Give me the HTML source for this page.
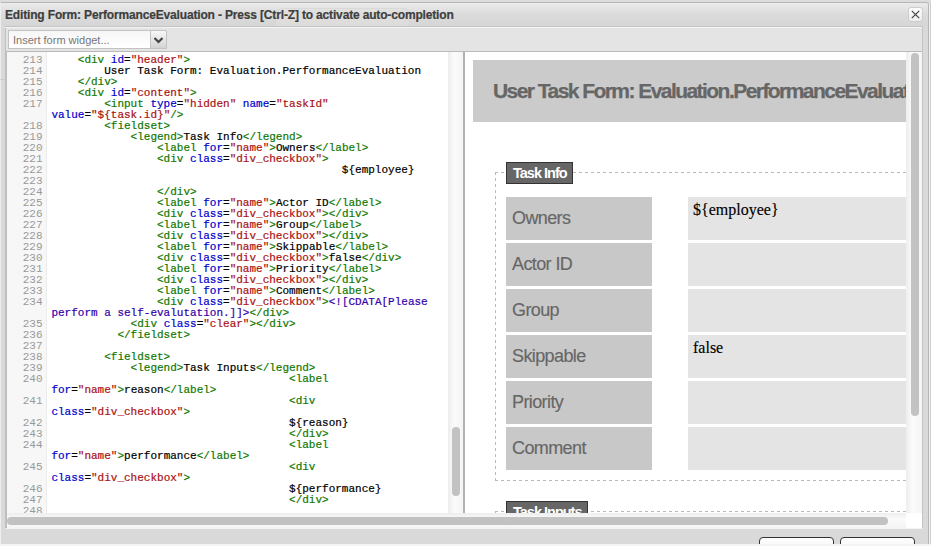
<!DOCTYPE html>
<html><head><meta charset="utf-8">
<style>
*{box-sizing:border-box}
html,body{margin:0;padding:0}
body{width:931px;height:546px;overflow:hidden;position:relative;background:#cfcfcf;font-family:"Liberation Sans",sans-serif}
.abs{position:absolute}
#topstrip{left:0;top:0;width:931px;height:3px;background:#dcdcdc}
#dialog{left:0;top:2px;width:929px;height:560px;background:#d9d9d9;border:1px solid #b6b6b6;border-left-color:#eeeeee;border-radius:0 3px 0 0}
#titlebar{left:1px;top:3px;width:927px;height:23px;background:linear-gradient(#ebebeb,#dcdcdc 45%,#d6d6d6);border-radius:0 2px 0 0}
#tab{left:275px;top:8px;width:135px;height:18px;background:#e3e2df;border:1px solid #d2d2d2;border-bottom:none;border-radius:7px 7px 0 0;opacity:.55}
#title{left:5px;top:8px;font:bold 12px "Liberation Sans",sans-serif;color:#3e3e3e;letter-spacing:-0.16px;-webkit-text-stroke:0.2px;white-space:nowrap}
#closebtn{left:908px;top:7px;width:15px;height:15px;border:1px solid #cdcdcd;border-radius:3px;background:linear-gradient(#fdfdfd,#ececec)}
#frame{left:5px;top:26px;width:918px;height:503px;background:#e4e4e4;border:1px solid #c4c4c4;border-left-color:#c0c0c0;border-bottom-color:#f4f4f4}
#frame2{left:5px;top:27px;width:917px;height:1px;background:#f3f3f3}
#toolbar{left:6px;top:51px;width:916px;height:1px;background:#b9b9b9}
#lframe{left:6px;top:52px;width:1px;height:476px;background:#bdbdbd}
#select{left:8px;top:30px;width:143px;height:19px;background:linear-gradient(#f6f6f6,#fff);border:1px solid #c3c3c3;border-right:none}
#selbtn{left:150px;top:30px;width:17px;height:19px;background:linear-gradient(#f8f8f8,#d3d3d3);border:1px solid #c3c3c3;border-radius:0 2px 0 0}
#seltext{left:13px;top:34px;font:11px "Liberation Sans",sans-serif;color:#777;white-space:nowrap}
#codepane{left:7px;top:52px;width:441px;height:461px;background:#fff;overflow:hidden}
#gutter{left:0;top:0;width:40px;height:461px;background:#f7f7f7;border-right:1px solid #ececec}
#nums{position:absolute;right:3.5px;top:3px;font:11px/11px "Liberation Mono",monospace;color:#999;white-space:pre;text-align:right}
#code{position:absolute;left:44.4px;top:3px;-webkit-text-stroke:0.2px;font:11px/11px "Liberation Mono",monospace;color:#000;white-space:pre}
.t{color:#170}.a{color:#00c}.s{color:#a11}.c{color:#30a}
#vs1{left:448px;top:52px;width:15px;height:461px;background:linear-gradient(90deg,#ededed,#fbfbfb 40%,#f4f4f4)}
#vs1t{left:452px;top:427px;width:8px;height:69px;border-radius:4px;background:#c2c2c2}
#divider{left:463px;top:52px;width:2px;height:461px;background:#b2b2b2}
#preview{left:465px;top:52px;width:441px;height:461px;background:#fff;overflow:hidden}
#vs2{left:906px;top:52px;width:16px;height:461px;background:linear-gradient(90deg,#ededed,#fbfbfb 40%,#f4f4f4)}
#vs2t{left:911px;top:53px;width:8px;height:363px;border-radius:4px;background:#c2c2c2}
#hs{left:7px;top:513px;width:899px;height:15px;background:linear-gradient(#ededed,#fbfbfb 40%,#f4f4f4)}
#hst{left:7px;top:517px;width:881px;height:8px;border-radius:4px;background:#c2c2c2}
#corner{left:906px;top:513px;width:16px;height:15px;background:#fff}
.btn{top:537px;height:20px;border:1.6px solid #333;border-radius:4px;background:linear-gradient(#fff,#ececec)}
/* preview */
#phead{left:8px;top:8px;width:460px;height:62px;background:#cbcbcb}
#phtext{left:28px;top:27px;font:bold 21px "Liberation Sans",sans-serif;color:#666;letter-spacing:-1.55px;-webkit-text-stroke:0.25px;white-space:nowrap}
.fs{background:repeating-linear-gradient(90deg,#b9b9b9 0 3px,transparent 3px 6px) 0 0/100% 1px no-repeat,repeating-linear-gradient(90deg,#b9b9b9 0 3px,transparent 3px 6px) 0 100%/100% 1px no-repeat,repeating-linear-gradient(180deg,#b9b9b9 0 3px,transparent 3px 6px) 0 0/1px 100% no-repeat}
#fs1{left:30px;top:120px;width:430px;height:309px}
.legend{height:22px;background:#666;border:1px solid #333;color:#fff;font:bold 14.5px "Liberation Sans",sans-serif;letter-spacing:-1px;white-space:nowrap;padding:2px 0 0 6px}
.lbl{left:41px;width:146px;height:43px;background:#c8c8c8;color:#666;font:18px "Liberation Sans",sans-serif;letter-spacing:-0.6px;-webkit-text-stroke:0.15px;padding:11px 0 0 6px;white-space:nowrap}
.val{left:223px;width:240px;height:43px;background:#e4e4e4;color:#000;font:16px "Liberation Serif",serif;padding:4px 0 0 5px;white-space:nowrap;-webkit-text-stroke:0.15px}
</style></head><body>
<div id="topstrip" class="abs"></div>
<div id="dialog" class="abs"></div>
<div id="titlebar" class="abs"></div>
<div id="tab" class="abs"></div>
<div id="title" class="abs">Editing Form: PerformanceEvaluation - Press [Ctrl-Z] to activate auto-completion</div>
<div id="closebtn" class="abs"><svg width="13" height="13" viewBox="0 0 13 13" style="position:absolute;left:0;top:0"><path d="M2.8 2.8L10.2 10.2M10.2 2.8L2.8 10.2" stroke="#3c3c3c" stroke-width="1.15"/></svg></div>
<div id="frame" class="abs"></div>
<div id="frame2" class="abs"></div>
<div id="toolbar" class="abs"></div>
<div id="lframe" class="abs"></div>
<div id="select" class="abs"></div>
<div id="selbtn" class="abs"><svg width="15" height="17" viewBox="0 0 15 17" style="position:absolute;left:0;top:0"><path d="M3.5 7L7.5 11L11.5 7" fill="none" stroke="#444" stroke-width="2.2"/></svg></div>
<div id="seltext" class="abs">Insert form widget...</div>
<div id="codepane" class="abs">
  <div id="gutter" class="abs"><div id="nums">213
214
215
216
217

218
219
220
221
222
223
224
225
226
227
228
229
230
231
232
233
234

235
236
237
238
239
240

241

242
243
244

245

246
247
248</div></div>
  <div id="code">    <span class="t">&lt;div</span> <span class="a">id</span>=<span class="s">"header"</span><span class="t">&gt;</span>
        User Task Form: Evaluation.PerformanceEvaluation
    <span class="t">&lt;/div&gt;</span>
    <span class="t">&lt;div</span> <span class="a">id</span>=<span class="s">"content"</span><span class="t">&gt;</span>
        <span class="t">&lt;input</span> <span class="a">type</span>=<span class="s">"hidden"</span> <span class="a">name</span>=<span class="s">"taskId"</span>
<span class="a">value</span>=<span class="s">"${task.id}"</span><span class="t">/&gt;</span>
        <span class="t">&lt;fieldset&gt;</span>
            <span class="t">&lt;legend&gt;</span>Task Info<span class="t">&lt;/legend&gt;</span>
                <span class="t">&lt;label</span> <span class="a">for</span>=<span class="s">"name"</span><span class="t">&gt;</span>Owners<span class="t">&lt;/label&gt;</span>
                <span class="t">&lt;div</span> <span class="a">class</span>=<span class="s">"div_checkbox"</span><span class="t">&gt;</span>
                                            ${employee}

                <span class="t">&lt;/div&gt;</span>
                <span class="t">&lt;label</span> <span class="a">for</span>=<span class="s">"name"</span><span class="t">&gt;</span>Actor ID<span class="t">&lt;/label&gt;</span>
                <span class="t">&lt;div</span> <span class="a">class</span>=<span class="s">"div_checkbox"</span><span class="t">&gt;</span><span class="t">&lt;/div&gt;</span>
                <span class="t">&lt;label</span> <span class="a">for</span>=<span class="s">"name"</span><span class="t">&gt;</span>Group<span class="t">&lt;/label&gt;</span>
                <span class="t">&lt;div</span> <span class="a">class</span>=<span class="s">"div_checkbox"</span><span class="t">&gt;</span><span class="t">&lt;/div&gt;</span>
                <span class="t">&lt;label</span> <span class="a">for</span>=<span class="s">"name"</span><span class="t">&gt;</span>Skippable<span class="t">&lt;/label&gt;</span>
                <span class="t">&lt;div</span> <span class="a">class</span>=<span class="s">"div_checkbox"</span><span class="t">&gt;</span>false<span class="t">&lt;/div&gt;</span>
                <span class="t">&lt;label</span> <span class="a">for</span>=<span class="s">"name"</span><span class="t">&gt;</span>Priority<span class="t">&lt;/label&gt;</span>
                <span class="t">&lt;div</span> <span class="a">class</span>=<span class="s">"div_checkbox"</span><span class="t">&gt;</span><span class="t">&lt;/div&gt;</span>
                <span class="t">&lt;label</span> <span class="a">for</span>=<span class="s">"name"</span><span class="t">&gt;</span>Comment<span class="t">&lt;/label&gt;</span>
                <span class="t">&lt;div</span> <span class="a">class</span>=<span class="s">"div_checkbox"</span><span class="t">&gt;</span><span class="c">&lt;![CDATA[Please</span>
<span class="c">perform a self-evalutation.]]&gt;</span><span class="t">&lt;/div&gt;</span>
            <span class="t">&lt;div</span> <span class="a">class</span>=<span class="s">"clear"</span><span class="t">&gt;</span><span class="t">&lt;/div&gt;</span>
          <span class="t">&lt;/fieldset&gt;</span>

        <span class="t">&lt;fieldset&gt;</span>
            <span class="t">&lt;legend&gt;</span>Task Inputs<span class="t">&lt;/legend&gt;</span>
                                    <span class="t">&lt;label</span>
<span class="a">for</span>=<span class="s">"name"</span><span class="t">&gt;</span>reason<span class="t">&lt;/label&gt;</span>
                                    <span class="t">&lt;div</span>
<span class="a">class</span>=<span class="s">"div_checkbox"</span><span class="t">&gt;</span>
                                    ${reason}
                                    <span class="t">&lt;/div&gt;</span>
                                    <span class="t">&lt;label</span>
<span class="a">for</span>=<span class="s">"name"</span><span class="t">&gt;</span>performance<span class="t">&lt;/label&gt;</span>
                                    <span class="t">&lt;div</span>
<span class="a">class</span>=<span class="s">"div_checkbox"</span><span class="t">&gt;</span>
                                    ${performance}
                                    <span class="t">&lt;/div&gt;</span>
</div>
</div>
<div id="vs1" class="abs"></div>
<div id="vs1t" class="abs"></div>
<div id="divider" class="abs"></div>
<div id="preview" class="abs">
  <div id="phead" class="abs"></div>
  <div id="phtext" class="abs">User Task Form: Evaluation.PerformanceEvaluation</div>
  <div id="fs1" class="abs fs"></div>
  <div class="abs legend" style="left:41px;top:110px;width:67px">Task Info</div>
  <div class="abs lbl" style="top:145px">Owners</div>
  <div class="abs val" style="top:145px">${employee}</div>
  <div class="abs lbl" style="top:191px">Actor ID</div>
  <div class="abs val" style="top:191px"></div>
  <div class="abs lbl" style="top:237px">Group</div>
  <div class="abs val" style="top:237px"></div>
  <div class="abs lbl" style="top:283px">Skippable</div>
  <div class="abs val" style="top:283px">false</div>
  <div class="abs lbl" style="top:329px">Priority</div>
  <div class="abs val" style="top:329px"></div>
  <div class="abs lbl" style="top:375px">Comment</div>
  <div class="abs val" style="top:375px"></div>
  <div id="fs2" class="abs fs" style="left:30px;top:459px;width:430px;height:100px"></div>
  <div class="abs legend" style="left:41px;top:449px;width:82px">Task Inputs</div>
</div>
<div id="vs2" class="abs"></div>
<div id="vs2t" class="abs"></div>
<div id="hs" class="abs"></div>
<div id="hst" class="abs"></div>
<div id="corner" class="abs"></div>
<div class="abs" style="left:0;top:79px;width:5px;height:1px;background:#cdcdcd"></div>
<div class="abs" style="left:929px;top:3px;width:1px;height:543px;background:#efefef"></div>
<div class="abs btn" style="left:759px;width:75px"></div>
<div class="abs btn" style="left:840px;width:75px"></div>
<div class="abs" style="left:0;top:544px;width:931px;height:2px;background:#f4f4f4"></div>
</body></html>
